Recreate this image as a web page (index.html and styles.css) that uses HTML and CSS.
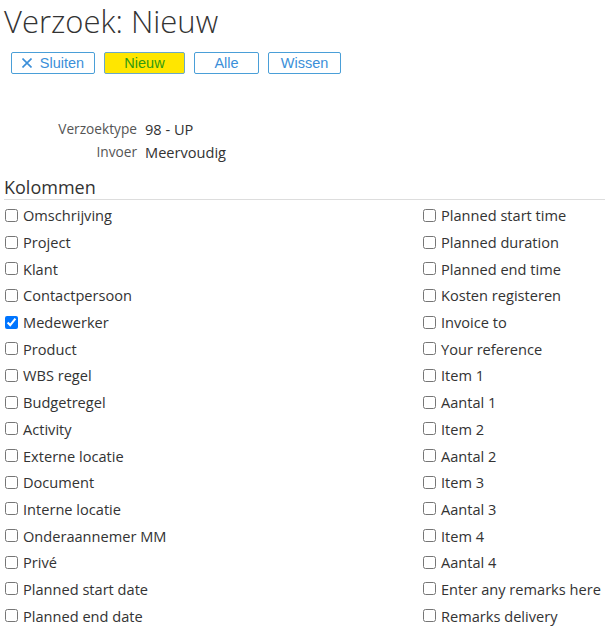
FILE: index.html
```html
<!DOCTYPE html>
<html>
<head>
<meta charset="utf-8">
<link rel="stylesheet" href="styles.css">
</head>
<body>
<h1 class="title">Verzoek: Nieuw</h1>
<div class="toolbar">
  <button class="btn btn-close"><svg class="x" width="10" height="10" viewBox="0 0 10 10"><path d="M0.5 0.5L9.5 9.5M9.5 0.5L0.5 9.5" stroke="#3b8fd9" stroke-width="1.6" fill="none"/></svg>Sluiten</button>
  <button class="btn btn-new">Nieuw</button>
  <button class="btn btn-alle">Alle</button>
  <button class="btn btn-wissen">Wissen</button>
</div>
<div class="info">
  <div class="label">Verzoektype</div><div class="value">98 - UP</div>
  <div class="label">Invoer</div><div class="value">Meervoudig</div>
</div>
<h2 class="section">Kolommen</h2>
<div class="cols">
  <div class="col">
    <label class="cb"><input type="checkbox">Omschrijving</label>
    <label class="cb"><input type="checkbox">Project</label>
    <label class="cb"><input type="checkbox">Klant</label>
    <label class="cb"><input type="checkbox">Contactpersoon</label>
    <label class="cb"><input type="checkbox" checked>Medewerker</label>
    <label class="cb"><input type="checkbox">Product</label>
    <label class="cb"><input type="checkbox">WBS regel</label>
    <label class="cb"><input type="checkbox">Budgetregel</label>
    <label class="cb"><input type="checkbox">Activity</label>
    <label class="cb"><input type="checkbox">Externe locatie</label>
    <label class="cb"><input type="checkbox">Document</label>
    <label class="cb"><input type="checkbox">Interne locatie</label>
    <label class="cb"><input type="checkbox">Onderaannemer MM</label>
    <label class="cb"><input type="checkbox">Privé</label>
    <label class="cb"><input type="checkbox">Planned start date</label>
    <label class="cb"><input type="checkbox">Planned end date</label>
  </div>
  <div class="col">
    <label class="cb"><input type="checkbox">Planned start time</label>
    <label class="cb"><input type="checkbox">Planned duration</label>
    <label class="cb"><input type="checkbox">Planned end time</label>
    <label class="cb"><input type="checkbox">Kosten registeren</label>
    <label class="cb"><input type="checkbox">Invoice to</label>
    <label class="cb"><input type="checkbox">Your reference</label>
    <label class="cb"><input type="checkbox">Item 1</label>
    <label class="cb"><input type="checkbox">Aantal 1</label>
    <label class="cb"><input type="checkbox">Item 2</label>
    <label class="cb"><input type="checkbox">Aantal 2</label>
    <label class="cb"><input type="checkbox">Item 3</label>
    <label class="cb"><input type="checkbox">Aantal 3</label>
    <label class="cb"><input type="checkbox">Item 4</label>
    <label class="cb"><input type="checkbox">Aantal 4</label>
    <label class="cb"><input type="checkbox">Enter any remarks here</label>
    <label class="cb"><input type="checkbox">Remarks delivery</label>
  </div>
</div>
</body>
</html>
```
FILE: styles.css
```css
html, body {
  margin: 0;
  padding: 0;
  background: #fff;
  overflow: hidden;
}
body {
  padding: 0 0 0 4px;
  font-family: "Open Sans", sans-serif;
  color: #333;
  font-size: 14.6px;
}
.title {
  margin: 0;
  padding-top: 1px;
  font-weight: 300;
  font-size: 31px;
  line-height: 40px;
  color: #333;
}
.toolbar {
  display: flex;
  gap: 9px;
  margin-top: 11px;
  padding-left: 7px;
}
.btn {
  display: flex;
  align-items: center;
  justify-content: center;
  height: 22px;
  padding: 0;
  border: 1px solid #4a9fd8;
  border-radius: 2px;
  background: #fff;
  color: #3b8fd9;
  font-family: "Liberation Sans", Arial, sans-serif;
  font-size: 14.5px;
  line-height: 20px;
  width: 84px;
}
.btn .x {
  margin-right: 8px;
}
.btn-new {
  width: 81px;
  background: #ffe600;
  color: #2f9a12;
  border-color: #6aa8c8;
}
.btn-alle { width: 65px; }
.btn-wissen { width: 73px; }
.info {
  display: grid;
  grid-template-columns: 133px auto;
  column-gap: 8px;
  row-gap: 3px;
  margin-top: 45px;
  line-height: 20px;
}
.label {
  text-align: right;
  color: #555;
  font-size: 13.7px;
}
.value {
  color: #333;
}
.section {
  margin: 13px 0 0 0;
  font-weight: 400;
  font-size: 18px;
  line-height: 24px;
  color: #333;
  border-bottom: 1px solid #ddd;
  padding-bottom: 0;
}
.cols {
  display: grid;
  grid-template-columns: 418px auto;
  margin-top: 2px;
}
.col {
  display: flex;
  flex-direction: column;
}
.cb {
  display: flex;
  align-items: center;
  height: 26.7px;
  white-space: nowrap;
}
.cb input {
  margin: 0 5px 0 1px;
  width: 13px;
  height: 13px;
}
```
